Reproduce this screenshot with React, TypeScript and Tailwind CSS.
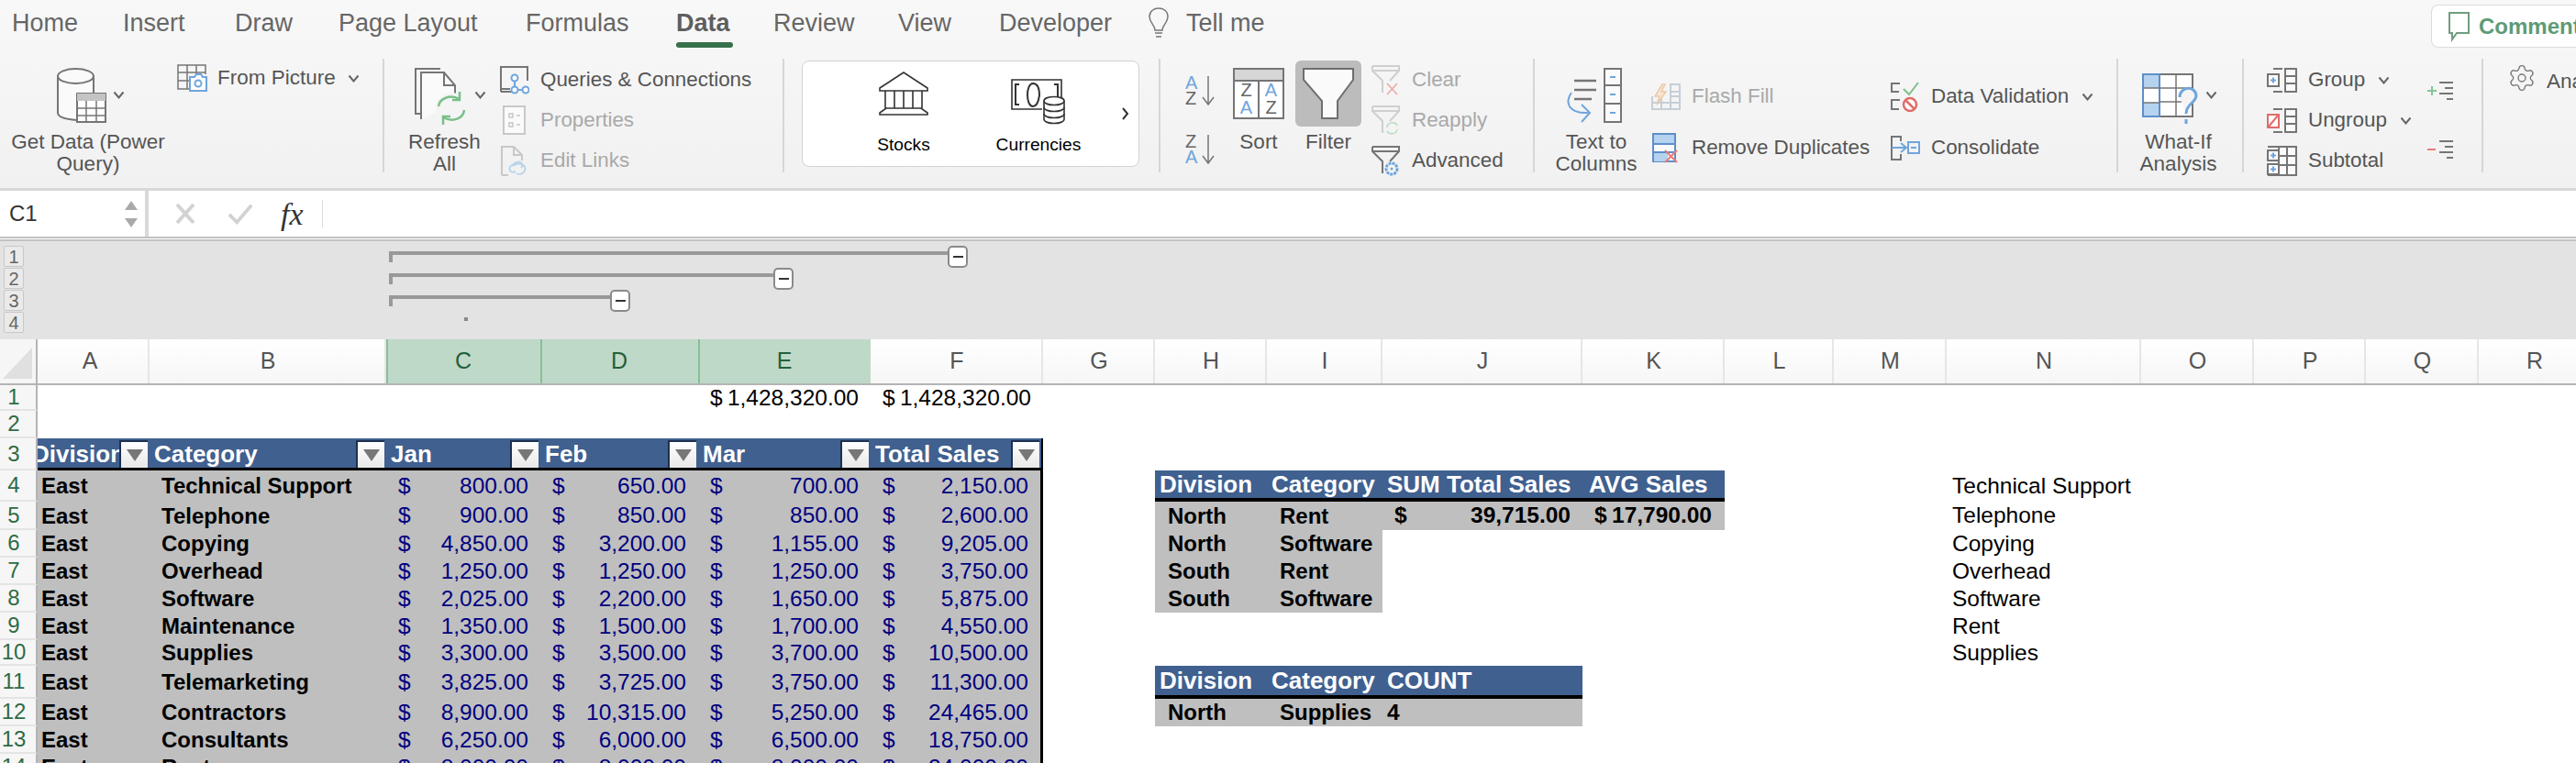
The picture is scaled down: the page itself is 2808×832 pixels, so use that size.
import type { ReactNode } from "react";
import { Settings } from "lucide-react";

const GRAY = "#757575";
const BLUE = "#6fa5dc";
const LIGHT = "#c8c8c8";

const Chevron = ({ className = "" }: { className?: string }) => (
  <svg width="13" height="9" viewBox="0 0 13 9" className={className}>
    <path d="M1.5 1.5 6.5 7.5 11.5 1.5" fill="none" stroke="#666" strokeWidth="2" />
  </svg>
);

const GetDataIcon = () => (
  <svg width="54" height="60" viewBox="0 0 54 60">
    <path d="M1 9V49C1 53 8 56 22 57V28H40V9" fill="#fafafa" stroke={GRAY} strokeWidth="2" />
    <ellipse cx="20.5" cy="9" rx="19.5" ry="8" fill="#fafafa" stroke={GRAY} strokeWidth="2" />
    <rect x="22" y="28" width="31" height="31" fill="#fff" stroke={GRAY} strokeWidth="2" />
    <rect x="22" y="28" width="31" height="8" fill="#c4c4c4" />
    <path d="M22 44H53M22 52H53M32 36V59M43 36V59" stroke={GRAY} strokeWidth="1.5" />
  </svg>
);

const FromPictureIcon = () => (
  <svg width="33" height="30" viewBox="0 0 33 30">
    <path d="M14 27H1V1H31V11M1 9H31M1 18H15M11 1V27M21 1V11" fill="none" stroke={GRAY} strokeWidth="1.5" />
    <path d="M14 14H19L21 11H26L28 14H32V29H14Z" fill="#fff" stroke={BLUE} strokeWidth="2" />
    <circle cx="23" cy="21" r="3.5" fill="none" stroke={BLUE} strokeWidth="2" />
  </svg>
);

const RefreshIcon = () => (
  <svg width="58" height="62" viewBox="0 0 58 62">
    <path d="M14 50H1V1H28" fill="none" stroke={GRAY} strokeWidth="2" />
    <path d="M7 56V5H32L44 19V38" fill="#fafafa" stroke={GRAY} strokeWidth="2" />
    <path d="M32 5V19H44" fill="none" stroke={GRAY} strokeWidth="2" />
    <circle cx="40" cy="44" r="17" fill="#f4f4f4" />
    <path d="M26 42C27 34 38 28 49 34M54 46C53 55 42 60 31 54" fill="none" stroke="#78c08a" strokeWidth="2.5" />
    <path d="M49 26V35H41M31 62V53H39" fill="none" stroke="#78c08a" strokeWidth="2.5" />
  </svg>
);

const QueriesIcon = () => (
  <svg width="33" height="31" viewBox="0 0 33 31">
    <path d="M2 28V1H31V16M2 28H14" fill="none" stroke={GRAY} strokeWidth="2" />
    <path d="M1 25H12" stroke={GRAY} strokeWidth="2" />
    <path d="M17 14V26H29" fill="none" stroke={BLUE} strokeWidth="2" />
    <circle cx="17" cy="13" r="3.5" fill="#fff" stroke={BLUE} strokeWidth="2" />
    <circle cx="17" cy="26" r="3.5" fill="#fff" stroke={BLUE} strokeWidth="2" />
    <circle cx="29" cy="26" r="3.5" fill="#fff" stroke={BLUE} strokeWidth="2" />
  </svg>
);

const PropertiesIcon = () => (
  <svg width="25" height="32" viewBox="0 0 25 32">
    <rect x="1" y="1" width="23" height="30" fill="#fafafa" stroke={LIGHT} strokeWidth="2" />
    <path d="M7 9H11V13H7ZM7 19H11V23H7ZM15 11H19M15 21H19" fill="none" stroke={LIGHT} strokeWidth="1.5" />
  </svg>
);

const EditLinksIcon = () => (
  <svg width="29" height="33" viewBox="0 0 29 33">
    <path d="M1 32V1H14L23 10V16M14 1V10H23M1 32H8" fill="none" stroke={LIGHT} strokeWidth="2" />
    <path d="M16 28C10 31 7 24 12 21L17 18C22 16 25 21 22 24M13 22C18 18 24 19 26 23C28 28 22 33 17 30" fill="none" stroke="#bcd5ec" strokeWidth="2" />
  </svg>
);

const StocksIcon = () => (
  <svg width="54" height="48" viewBox="0 0 54 48" fill="none" stroke="#333" strokeWidth="1.6">
    <path d="M1 18 27 1 53 18V21H1Z" fill="#fff" />
    <path d="M7 21V40M17 21V40M27 21V40M37 21V40M47 21V40" />
    <path d="M8 40H46L53 45V47H1V45Z" fill="#fff" />
  </svg>
);

const CurrenciesIcon = () => (
  <svg width="60" height="50" viewBox="0 0 60 50" fill="none" stroke="#333" strokeWidth="1.6">
    <path d="M34 33H1V1H55V22" />
    <path d="M9 6H5V28H9M51 20V6H47M24 5C16 5 16 30 24 30C28 30 30 25 31 18C31 10 29 5 24 5Z" strokeWidth="2" />
    <path d="M36 24C36 18 58 18 58 24V44C58 50 36 50 36 44Z" fill="#fff" />
    <path d="M36 24C36 30 58 30 58 24M36 31C36 37 58 37 58 31M36 38C36 44 58 44 58 38" />
  </svg>
);

const SortArrows = ({ first, second, firstBlue }: { first: string; second: string; firstBlue: boolean }) => (
  <div className="flex w-[34px] h-[34px]">
    <div className="w-[17px] flex flex-col text-[20px] leading-[17px]">
      <span className={firstBlue ? "text-[#6fa5dc]" : "text-[#666]"}>{first}</span>
      <span className={firstBlue ? "text-[#666]" : "text-[#6fa5dc]"}>{second}</span>
    </div>
    <svg width="15" height="34" viewBox="0 0 15 34">
      <path d="M8 1V31M2 24 8 32 14 24" fill="none" stroke={GRAY} strokeWidth="1.5" />
    </svg>
  </div>
);

const SortIcon = () => (
  <div className="w-[56px] h-[56px] flex flex-col border-2 border-[#757575] bg-white">
    <div className="h-[13px] shrink-0 bg-[#d6d6d6] border-b-2 border-[#757575]" />
    <div className="flex-1 flex text-[20px] leading-[19px] text-center">
      <div className="flex-1 flex flex-col border-r-2 border-[#757575]">
        <span className="text-[#666]">Z</span>
        <span className="text-[#6fa5dc]">A</span>
      </div>
      <div className="flex-1 flex flex-col">
        <span className="text-[#6fa5dc]">A</span>
        <span className="text-[#666]">Z</span>
      </div>
    </div>
  </div>
);

const FilterIcon = () => (
  <svg width="56" height="56" viewBox="0 0 56 56">
    <path d="M1 1H55V13L38 36V55H21V36L1 13Z" fill="#fafafa" stroke="#6e6e6e" strokeWidth="2" />
  </svg>
);

const SmallFunnel = ({ color, children }: { color: string; children: ReactNode }) => (
  <svg width="32" height="33" viewBox="0 0 32 33">
    <path d="M1 1H30V6L20 17M12 30V17L1 6V1M1 6H30" fill="none" stroke={color} strokeWidth="2" />
    {children}
  </svg>
);

const TextToColumnsIcon = () => (
  <svg width="62" height="60" viewBox="0 0 62 60">
    <path d="M9 14H33M9 24H33M9 34H28" stroke={GRAY} strokeWidth="2.5" />
    <rect x="42" y="1" width="18" height="58" fill="#fafafa" stroke={GRAY} strokeWidth="2" />
    <path d="M42 19H60M42 39H60" stroke={GRAY} strokeWidth="2" />
    <path d="M48 10H54M48 29H54M48 49H54" stroke={BLUE} strokeWidth="2" />
    <path d="M6 27C-2 39 4 50 24 49M17 40 26 49 17 59" fill="none" stroke={BLUE} strokeWidth="2" />
  </svg>
);

const FlashFillIcon = () => (
  <svg width="32" height="29" viewBox="0 0 32 29">
    <path d="M1 14V28H31V1H20M1 21H31M11 14V28M21 1V28M21 9H31M21 14H31" fill="none" stroke="#c5cfd8" strokeWidth="2" />
    <path d="M12 1 4 14H9L6 23 16 9H11L15 1Z" fill="#f8e5d6" stroke="#ecc9a8" strokeWidth="1.5" />
  </svg>
);

const RemoveDuplicatesIcon = () => (
  <svg width="29" height="33" viewBox="0 0 29 33">
    <rect x="1" y="1" width="24" height="30" fill="#fafafa" stroke="#5d8fca" strokeWidth="2" />
    <rect x="2" y="2" width="22" height="10" fill="#b5d2ee" />
    <rect x="2" y="21" width="15" height="10" fill="#b5d2ee" />
    <path d="M1 12H25M1 21H25" stroke="#5d8fca" strokeWidth="2" />
    <path d="M14 19 27 32M27 19 14 32" stroke="#e77b78" strokeWidth="2" />
  </svg>
);

const DataValidationIcon = () => (
  <svg width="33" height="33" viewBox="0 0 33 33">
    <path d="M11 2H2V11H10M11 20H2V30H10" fill="none" stroke={GRAY} strokeWidth="2" />
    <path d="M15 8 21 14 31 1" fill="none" stroke="#7cc08b" strokeWidth="2" />
    <circle cx="22" cy="25" r="7" fill="#fff" stroke="#e06c69" strokeWidth="2.5" />
    <path d="M17 20 27 30" stroke="#e06c69" strokeWidth="2.5" />
  </svg>
);

const ConsolidateIcon = () => (
  <svg width="33" height="27" viewBox="0 0 33 27">
    <path d="M12 6V1H2V26H12V20" fill="none" stroke={GRAY} strokeWidth="2" />
    <path d="M2 13H17M12 8 18 13 12 18" fill="none" stroke={BLUE} strokeWidth="2" />
    <rect x="20" y="7" width="12" height="12" fill="none" stroke={BLUE} strokeWidth="2" />
    <path d="M23 13H29" stroke={BLUE} strokeWidth="2" />
  </svg>
);

const WhatIfIcon = () => (
  <svg width="62" height="56" viewBox="0 0 62 56" className="mt-[6px]">
    <rect x="1" y="1" width="54" height="46" fill="#fff" stroke={GRAY} strokeWidth="2" />
    <rect x="1" y="1" width="18" height="46" fill="#fff" stroke="#5d8fca" strokeWidth="2" />
    <rect x="2" y="2" width="16" height="14" fill="#b5d2ee" />
    <rect x="2" y="32" width="16" height="14" fill="#b5d2ee" />
    <path d="M19 16H55M19 31H55M37 1V47M1 16H19M1 32H19" stroke={GRAY} strokeWidth="1.5" />
    <path d="M41 26C41 14 58 13 59 24C59 32 48 33 48 44" fill="#f4f4f4" stroke={BLUE} strokeWidth="3" />
    <path d="M48 50V55" stroke={BLUE} strokeWidth="3" />
  </svg>
);

const GroupIcon = ({ ungroup = false }: { ungroup?: boolean }) => (
  <svg width="33" height="27" viewBox="0 0 33 27">
    <rect x="20" y="1" width="12" height="25" fill="#fafafa" stroke={GRAY} strokeWidth="2" />
    <path d="M20 9H32M20 17H32M7 1H17M7 26H17" stroke={GRAY} strokeWidth="2" />
    {ungroup ? (
      <>
        <rect x="1" y="7" width="12" height="14" fill="#fff" stroke="#e06c69" strokeWidth="2" />
        <path d="M2 20 12 8" stroke="#e06c69" strokeWidth="2" />
      </>
    ) : (
      <>
        <rect x="1" y="7" width="12" height="13" fill="#fff" stroke={GRAY} strokeWidth="2" />
        <path d="M4 13.5H10M7 10.5V16.5" stroke={BLUE} strokeWidth="2" />
      </>
    )}
  </svg>
);

const SubtotalIcon = () => (
  <svg width="33" height="33" viewBox="0 0 33 33">
    <rect x="13" y="1" width="19" height="31" fill="#fafafa" stroke={GRAY} strokeWidth="2" />
    <path d="M13 11H32M13 21H32M22 1V32M1 1H13M1 32H13" stroke={GRAY} strokeWidth="2" />
    <rect x="1" y="5" width="12" height="11" fill="#fff" stroke={GRAY} strokeWidth="2" />
    <rect x="1" y="20" width="12" height="11" fill="#fff" stroke={GRAY} strokeWidth="2" />
    <path d="M4 10.5H10M7 7.5V13.5M4 25.5H10M7 22.5V28.5" stroke={BLUE} strokeWidth="2" />
  </svg>
);

const DetailIcon = ({ color, plus }: { color: string; plus: boolean }) => (
  <svg width="30" height="21" viewBox="0 0 30 21">
    <path d="M14 2H29M20 8H29M14 14H29M22 20H29" stroke={GRAY} strokeWidth="2" />
    <path d={plus ? "M1 11H11M6 6V16" : "M1 11H10"} stroke={color} strokeWidth="2" />
  </svg>
);

const BigButton = ({ width, pad, icon, chevron, lines }: { width: string; pad: string; icon: ReactNode; chevron?: boolean; lines: string[] }) => (
  <div className={`${width} flex flex-col shrink-0`}>
    <div className={`${pad} h-[91px] pt-[22px] flex items-start`}>
      {icon}
      {chevron && <Chevron className="ml-[7px] mt-[25px]" />}
    </div>
    <div className="text-center text-[22.5px] leading-[24px] text-[#555]">
      {lines.map((l) => (
        <div key={l}>{l}</div>
      ))}
    </div>
  </div>
);

const SmallRow = ({ icon, label, off, chevron, height = "h-[44px]" }: { icon: ReactNode; label: string; off?: boolean; chevron?: boolean; height?: string }) => (
  <div className={`${height} flex items-center`}>
    <div className="w-[33px] flex justify-center shrink-0">{icon}</div>
    <span className={`ml-[12px] text-[22.4px] whitespace-nowrap ${off ? "text-[#a9a9a9]" : "text-[#555]"}`}>{label}</span>
    {chevron && <Chevron className="ml-[14px]" />}
  </div>
);

const Sep = () => <div className="w-[2px] h-[124px] mt-[12px] bg-[#d6d6d6] shrink-0" />;

const tabs = [
  { t: "Home", w: "w-[121px]" },
  { t: "Insert", w: "w-[122px]" },
  { t: "Draw", w: "w-[113px]" },
  { t: "Page Layout", w: "w-[204px]" },
  { t: "Formulas", w: "w-[164px]" },
  { t: "Data", w: "w-[106px]", on: true },
  { t: "Review", w: "w-[136px]" },
  { t: "View", w: "w-[110px]" },
  { t: "Developer", w: "w-[162px]" },
];

function TabBar() {
  return (
    <div className="h-[52px] flex pl-[13px]">
      {tabs.map((tab) => (
        <div key={tab.t} className={`${tab.w} flex flex-col shrink-0`}>
          <div className={`h-[46px] pt-1 flex items-center text-[27px] ${tab.on ? "font-bold text-[#5e5e5e]" : "text-[#666]"}`}>{tab.t}</div>
          {tab.on && <div className="h-[6px] w-[62px] rounded-full bg-[#36704a]" />}
        </div>
      ))}
      <div className="h-[46px] pt-1 flex items-center text-[27px] text-[#666]">
        <svg width="24" height="34" viewBox="0 0 24 34" fill="none" stroke="#777" strokeWidth="1.5">
          <path d="M8 25C8 19 2 17 2 10C2 4 7 1 12 1C17 1 22 4 22 10C22 17 16 19 16 25Z" />
          <path d="M8 28H16M9 32H15" />
        </svg>
        <span className="ml-[18px]">Tell me</span>
      </div>
      <div className="flex-1" />
      <div className="w-[158px] h-[47px] mt-[5px] flex items-center pl-[17px] bg-white border border-r-0 border-[#dcdcdc] rounded-l-lg overflow-hidden">
        <svg width="25" height="34" viewBox="0 0 25 34" className="shrink-0">
          <path d="M2 2H23V24H10L5 31V24H2Z" fill="none" stroke="#6f9d7f" strokeWidth="2" />
        </svg>
        <span className="ml-[9px] text-[24px] font-bold text-[#5e9a75] whitespace-nowrap">Comments</span>
      </div>
    </div>
  );
}

function Ribbon() {
  return (
    <div className="h-[153px] flex">
      <div className="w-[417px] flex shrink-0">
        <BigButton
          width="w-[192px]"
          pad="pl-[62px]"
          icon={<GetDataIcon />}
          chevron
          lines={["Get Data (Power", "Query)"]}
        />
        <div className="mt-[18px] ml-[1px] h-[30px] flex items-center">
          <FromPictureIcon />
          <span className="ml-[11px] text-[22.5px] text-[#555]">From Picture</span>
          <Chevron className="ml-[13px]" />
        </div>
      </div>
      <Sep />
      <div className="w-[434px] flex pl-[6px] shrink-0">
        <BigButton width="w-[119px]" pad="pl-[27px]" icon={<RefreshIcon />} chevron lines={["Refresh", "All"]} />
        <div className="pt-[13px]">
          <SmallRow icon={<QueriesIcon />} label="Queries & Connections" />
          <SmallRow icon={<PropertiesIcon />} label="Properties" off />
          <SmallRow icon={<EditLinksIcon />} label="Edit Links" off />
        </div>
      </div>
      <Sep />
      <div className="w-[408px] pl-[19px] pt-[14px] shrink-0">
        <div className="w-[368px] h-[116px] flex bg-white border border-[#d2d2d2] rounded-lg pl-[45px]">
          <div className="w-[130px] flex flex-col items-center shrink-0">
            <div className="h-[79px] pt-[11px]">
              <StocksIcon />
            </div>
            <div className="text-[19.2px] leading-[24px] text-black">Stocks</div>
          </div>
          <div className="w-[130px] ml-[17px] flex flex-col items-center shrink-0">
            <div className="h-[79px] pt-[19px]">
              <CurrenciesIcon />
            </div>
            <div className="text-[19.2px] leading-[24px] text-black">Currencies</div>
          </div>
          <svg width="10" height="16" viewBox="0 0 10 16" className="ml-[25px] self-center">
            <path d="M2 2 7 8 2 14" fill="none" stroke="#333" strokeWidth="2" />
          </svg>
        </div>
      </div>
      <Sep />
      <div className="w-[406px] flex pl-[27px] shrink-0">
        <div className="w-[34px] pt-[30px] shrink-0">
          <SortArrows first="A" second="Z" firstBlue />
          <div className="mt-[30px]">
            <SortArrows first="Z" second="A" firstBlue={false} />
          </div>
        </div>
        <div className="w-[60px] ml-[16px] flex flex-col items-center shrink-0">
          <div className="h-[91px] pt-[22px]">
            <SortIcon />
          </div>
          <div className="text-[22.5px] leading-[24px] text-[#555]">Sort</div>
        </div>
        <div className="w-[72px] ml-[10px] flex flex-col items-center shrink-0">
          <div className="w-[72px] h-[72px] mt-[14px] rounded-md bg-[#bcbcbc] flex items-center justify-center">
            <FilterIcon />
          </div>
          <div className="mt-[5px] text-[22.5px] leading-[24px] text-[#555]">Filter</div>
        </div>
        <div className="ml-[10px] pt-[13px]">
          <SmallRow
            off
            label="Clear"
            icon={
              <SmallFunnel color="#cfcfcf">
                <path d="M17 20 28 32M28 20 17 32" stroke="#eba5a3" strokeWidth="1.5" />
              </SmallFunnel>
            }
          />
          <SmallRow
            off
            label="Reapply"
            icon={
              <SmallFunnel color="#cfcfcf">
                <path d="M17 24C17 18 26 17 28 22M28 26C27 32 19 32 17 28" fill="none" stroke="#b6dcc0" strokeWidth="1.5" />
              </SmallFunnel>
            }
          />
          <SmallRow
            label="Advanced"
            icon={
              <SmallFunnel color={GRAY}>
                <circle cx="22" cy="25" r="6" fill="#f4f4f4" stroke={BLUE} strokeWidth="3" strokeDasharray="3 1" />
                <circle cx="22" cy="25" r="1.5" fill={BLUE} />
              </SmallFunnel>
            }
          />
        </div>
      </div>
      <Sep />
      <div className="w-[634px] flex pl-[12px] shrink-0">
        <BigButton width="w-[110px]" pad="pl-[22px]" icon={<TextToColumnsIcon />} lines={["Text to", "Columns"]} />
        <div className="w-[261px] ml-[4px] pt-[25px] shrink-0">
          <SmallRow height="h-[56px]" off label="Flash Fill" icon={<FlashFillIcon />} />
          <SmallRow height="h-[56px]" label="Remove Duplicates" icon={<RemoveDuplicatesIcon />} />
        </div>
        <div className="pt-[25px]">
          <SmallRow height="h-[56px]" label="Data Validation" chevron icon={<DataValidationIcon />} />
          <SmallRow height="h-[56px]" label="Consolidate" icon={<ConsolidateIcon />} />
        </div>
      </div>
      <Sep />
      <div className="w-[135px] shrink-0">
        <BigButton width="w-[131px]" pad="pl-[26px]" icon={<WhatIfIcon />} chevron lines={["What-If", "Analysis"]} />
      </div>
      <Sep />
      <div className="w-[259px] flex pl-[25px] shrink-0">
        <div className="w-[174px] pt-[13px] shrink-0">
          <SmallRow label="Group" chevron icon={<GroupIcon />} />
          <SmallRow label="Ungroup" chevron icon={<GroupIcon ungroup />} />
          <SmallRow label="Subtotal" icon={<SubtotalIcon />} />
        </div>
        <div className="pt-[36px]">
          <DetailIcon color="#84c694" plus />
          <div className="mt-[43px]">
            <DetailIcon color="#e77b78" plus={false} />
          </div>
        </div>
      </div>
      <Sep />
      <div className="flex-1 flex items-start pl-[26px] pt-[17px] overflow-hidden">
        <Settings size={32} strokeWidth={1} color="#777" className="shrink-0" />
        <span className="ml-[11px] mt-[3px] text-[22.5px] text-[#555] whitespace-nowrap">Analyze Data</span>
      </div>
    </div>
  );
}

function FormulaBar() {
  return (
    <>
      <div className="h-[50px] flex bg-white">
        <div className="w-[158px] flex items-center justify-between pl-[10px] pr-[8px] shrink-0">
          <span className="text-[24px] text-[#333]">C1</span>
          <div className="flex flex-col gap-[9px]">
            <div className="w-0 h-0 border-x-[7px] border-x-transparent border-b-[10px] border-b-[#aaa]" />
            <div className="w-0 h-0 border-x-[7px] border-x-transparent border-t-[10px] border-t-[#aaa]" />
          </div>
        </div>
        <div className="w-[4px] bg-[#d8d8d8] shrink-0" />
        <div className="flex-1 flex items-center pl-[28px]">
          <svg width="24" height="24" viewBox="0 0 24 24" stroke="#d2d2d2" strokeWidth="4" fill="none">
            <path d="M3 2 21 22M21 2 3 22" />
          </svg>
          <svg width="28" height="24" viewBox="0 0 30 24" stroke="#d2d2d2" strokeWidth="4" fill="none" className="ml-[34px]">
            <path d="M2 13 11 22 28 2" />
          </svg>
          <span className="ml-[30px] w-[45px] font-['Liberation_Serif',serif] italic text-[34px] text-[#333]">fx</span>
          <div className="w-[1px] h-[30px] bg-[#dcdcdc]" />
        </div>
      </div>
      <div className="h-[5px] bg-white border-y-2 border-[#c2c2c2]" />
    </>
  );
}

const MinusBox = () => (
  <div className="w-[22px] h-[24px] shrink-0 rounded-[5px] bg-white border-2 border-[#8a8a8a] flex items-center justify-center">
    <div className="w-[11px] h-[2px] bg-[#333]" />
  </div>
);

const Level = ({ n, children }: { n: number; children: ReactNode }) => (
  <div className="h-[24px] flex">
    <div className="ml-[4px] w-[22px] h-[23px] flex items-center justify-center rounded-[2px] bg-[#eaeaea] border border-[#c8c8c8] text-[20px] text-[#666] shrink-0">{n}</div>
    {children}
  </div>
);

function OutlineBar() {
  return (
    <div className="h-[107px] pt-[5px] bg-[#e3e3e3]">
      <Level n={1}>
        <div className="ml-[398px] mt-[6px] h-[12px] w-[609px] border-t-4 border-l-4 border-[#999]" />
        <MinusBox />
      </Level>
      <Level n={2}>
        <div className="ml-[398px] mt-[6px] h-[12px] w-[419px] border-t-4 border-l-4 border-[#999]" />
        <MinusBox />
      </Level>
      <Level n={3}>
        <div className="ml-[398px] mt-[6px] h-[12px] w-[241px] border-t-4 border-l-4 border-[#999]" />
        <MinusBox />
      </Level>
      <Level n={4}>
        <div className="ml-[480px] mt-[6px] w-[4px] h-[4px] bg-[#888]" />
      </Level>
    </div>
  );
}

const COLS = "grid grid-cols-[41px_122px_258px_168px_172px_188px_188px_122px_122px_126px_218px_155px_119px_123px_212px_123px_122px_123px_122px]";

const letters = "ABCDEFGHIJKLMNOPQR".split("");

function ColumnHeaders() {
  return (
    <div className={`${COLS} h-[50px] border-b-2 border-[#b4b4b4]`}>
      <div className="bg-[#f6f6f6] border-r-2 border-[#b4b4b4] flex items-end justify-end pr-[4px] pb-[5px]">
        <div className="w-0 h-0 border-l-[32px] border-l-transparent border-b-[34px] border-b-[#e0e0e0]" />
      </div>
      {letters.map((l) => {
        const on = l === "C" || l === "D" || l === "E";
        return (
          <div
            key={l}
            className={
              on
                ? "flex items-center justify-center pr-[2px] text-[25px] text-[#24603c] bg-[#bfd9c8] border-l-2 border-[#86bf96]"
                : l === "A"
                  ? "flex items-center justify-center pr-[6px] text-[25px] text-[#555] bg-gradient-to-b from-white to-[#f6f6f6] border-r-2 border-[#e6e6e6]"
                  : "flex items-center justify-center pl-[2px] text-[25px] text-[#555] bg-gradient-to-b from-white to-[#f6f6f6] border-r-2 border-[#e6e6e6]"
            }
          >
            {l}
          </div>
        );
      })}
    </div>
  );
}

function Row({ n, height, children }: { n: number; height: string; children?: ReactNode }) {
  return (
    <div className={`${COLS} ${height}`}>
      <div className="flex items-center justify-center pr-[9px] bg-[#f6f6f6] border-r-2 border-b-2 border-r-[#b4b4b4] border-b-[#e4e4e4] text-[24px] text-[#2f6b45]">{n}</div>
      {children}
    </div>
  );
}

const Acc = ({ value, tone }: { value: string; tone: string }) => (
  <div className={`${tone} flex items-center justify-between px-[13px] text-[24.5px] whitespace-nowrap`}>
    <span>$</span>
    <span>{value}</span>
  </div>
);

const Gray = ({ text }: { text: string }) => (
  <div className="bg-[#bfbfbf] flex items-center pl-[14px] font-bold text-[24px] text-black whitespace-nowrap">{text}</div>
);

const FilterButton = () => (
  <div className="w-[31px] h-[30px] mr-[2px] shrink-0 bg-gradient-to-b from-white to-[#e8e8e8] border-l-2 border-t-2 border-[#1d3050] flex items-center justify-center">
    <div className="w-0 h-0 border-x-[9px] border-x-transparent border-t-[13px] border-t-[#777]" />
  </div>
);

const HeadCell = ({ text, center }: { text: string; center?: boolean }) => (
  <div className="bg-[#40608f] border-b-[3px] border-black flex items-end min-w-0">
    <div className={`flex-1 min-w-0 h-[30px] flex items-center overflow-hidden text-[26px] font-bold text-white whitespace-nowrap ${center ? "justify-center" : "pl-[5px]"}`}>
      <span className="shrink-0">{text}</span>
    </div>
    <FilterButton />
  </div>
);

const BlueCell = ({ text, pad = "pl-[5px]" }: { text?: string; pad?: string }) => (
  <div className={`${pad} bg-[#40608f] border-b-4 border-black flex items-center text-[26px] font-bold text-white whitespace-nowrap`}>{text}</div>
);

const Blank = () => <div />;

const Plain = ({ text }: { text: string }) => (
  <div className="flex items-center pl-[6px] text-[24.5px] text-black whitespace-nowrap">{text}</div>
);

const sales: [string, string, string, string, string][] = [
  ["Technical Support", "800.00", "650.00", "700.00", "2,150.00"],
  ["Telephone", "900.00", "850.00", "850.00", "2,600.00"],
  ["Copying", "4,850.00", "3,200.00", "1,155.00", "9,205.00"],
  ["Overhead", "1,250.00", "1,250.00", "1,250.00", "3,750.00"],
  ["Software", "2,025.00", "2,200.00", "1,650.00", "5,875.00"],
  ["Maintenance", "1,350.00", "1,500.00", "1,700.00", "4,550.00"],
  ["Supplies", "3,300.00", "3,500.00", "3,700.00", "10,500.00"],
  ["Telemarketing", "3,825.00", "3,725.00", "3,750.00", "11,300.00"],
  ["Contractors", "8,900.00", "10,315.00", "5,250.00", "24,465.00"],
  ["Consultants", "6,250.00", "6,000.00", "6,500.00", "18,750.00"],
  ["Rent", "8,000.00", "8,000.00", "8,000.00", "24,000.00"],
];

const heights = ["h-[34px]", "h-[31px]", "h-[30px]", "h-[30px]", "h-[30px]", "h-[30px]", "h-[28px]", "h-[36px]", "h-[30px]", "h-[30px]", "h-[30px]"];

const navy = "bg-[#bfbfbf] text-[#000080]";

function rightSide(n: number): ReactNode {
  const bold = "bg-[#bfbfbf] text-black font-bold";
  if (n === 4)
    return (
      <>
        <BlueCell text="Division" />
        <BlueCell text="Category" />
        <BlueCell text="SUM Total Sales" />
        <BlueCell text="AVG Sales" pad="pl-[7px]" />
      </>
    );
  if (n === 5)
    return (
      <>
        <Gray text="North" />
        <Gray text="Rent" />
        <Acc value="39,715.00" tone={bold} />
        <div className={`${bold} flex items-center justify-between pl-[13px] pr-[14px] text-[24.5px]`}>
          <span>$</span>
          <span>17,790.00</span>
        </div>
      </>
    );
  if (n >= 6 && n <= 8)
    return (
      <>
        <Gray text={n === 6 ? "North" : "South"} />
        <Gray text={n === 7 ? "Rent" : "Software"} />
        <Blank />
        <Blank />
      </>
    );
  if (n === 11)
    return (
      <>
        <BlueCell text="Division" />
        <BlueCell text="Category" />
        <BlueCell text="COUNT" />
        <Blank />
      </>
    );
  if (n === 12)
    return (
      <>
        <Gray text="North" />
        <Gray text="Supplies" />
        <div className="bg-[#bfbfbf] flex items-center pl-[5px] font-bold text-[24.5px] text-black">4</div>
        <Blank />
      </>
    );
  return (
    <>
      <Blank />
      <Blank />
      <Blank />
      <Blank />
    </>
  );
}

const sideList: Record<number, string> = {
  4: "Technical Support",
  5: "Telephone",
  6: "Copying",
  7: "Overhead",
  8: "Software",
  9: "Rent",
  10: "Supplies",
};

function Sheet() {
  return (
    <div className="bg-white leading-none">
      <Row n={1} height="h-[28px]">
        <Blank />
        <Blank />
        <Blank />
        <Blank />
        <Acc value="1,428,320.00" tone="text-black" />
        <Acc value="1,428,320.00" tone="text-black" />
      </Row>
      <Row n={2} height="h-[30px]" />
      <Row n={3} height="h-[35px]">
        <HeadCell text="Division" center />
        <HeadCell text="Category" />
        <HeadCell text="Jan" />
        <HeadCell text="Feb" />
        <HeadCell text="Mar" />
        <div className="bg-[#40608f] border-b-[3px] border-r-[2px] border-black flex items-end">
          <div className="flex-1 h-[30px] flex items-center pl-[5px] text-[26px] font-bold text-white whitespace-nowrap">Total Sales</div>
          <FilterButton />
        </div>
      </Row>
      {sales.map((s, i) => {
        const n = i + 4;
        return (
          <Row key={n} n={n} height={heights[i]}>
            <div className="bg-[#bfbfbf] flex items-center pl-[4px] font-bold text-[24px] text-black">East</div>
            <div className="bg-[#bfbfbf] flex items-center pl-[13px] font-bold text-[24px] text-black whitespace-nowrap">{s[0]}</div>
            <Acc value={s[1]} tone={navy} />
            <Acc value={s[2]} tone={navy} />
            <Acc value={s[3]} tone={navy} />
            <Acc value={s[4]} tone={`${navy} border-r-[3px] border-black`} />
            <Blank />
            {rightSide(n)}
            <Blank />
            <Blank />
            {sideList[n] ? <Plain text={sideList[n]} /> : <Blank />}
          </Row>
        );
      })}
    </div>
  );
}

export default function App() {
  return (
    <div className="w-[2808px] h-[832px] overflow-hidden font-['Liberation_Sans',sans-serif] bg-white">
      <div className="bg-gradient-to-b from-[#f8f8f8] to-[#f1f1f1] border-b-[3px] border-[#d8d8d8]">
        <TabBar />
        <Ribbon />
      </div>
      <FormulaBar />
      <OutlineBar />
      <ColumnHeaders />
      <Sheet />
    </div>
  );
}
